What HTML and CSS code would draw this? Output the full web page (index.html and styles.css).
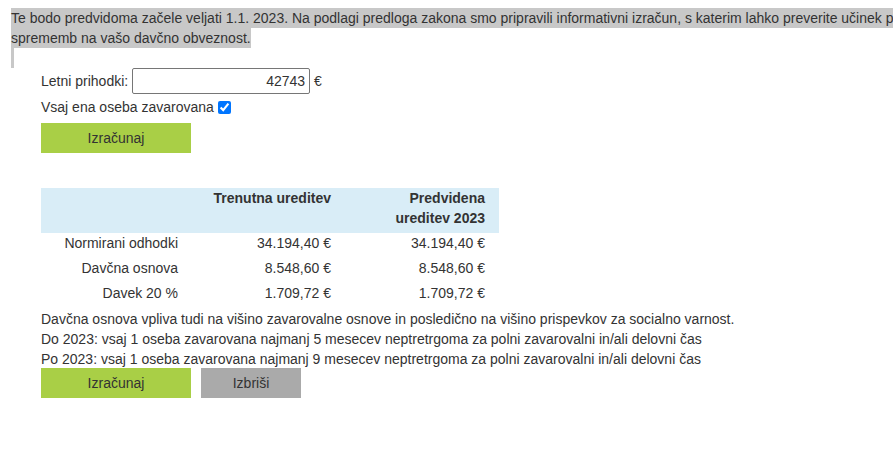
FILE: index.html
```html
<!DOCTYPE html>
<html>
<head>
    <meta charset="UTF-8">
    <meta name="viewport" content="width=device-width, initial-scale=1.0">
    <title>Informativni izračun</title>
    <link rel="stylesheet" href="styles.css">
</head>

<body>
    <div class="intro">
        <span class="mark">Te bodo predvidoma začele veljati 1.1. 2023. Na podlagi predloga zakona smo pripravili informativni izračun, s katerim lahko preverite učinek predlaganih sprememb na vašo davčno obveznost.</span><br>
        <span class="mark-gap"></span>
    </div>

    <div class="calc">
        <div class="row-income">
            <label for="income">Letni prihodki:</label>
            <input type="text" id="income" class="income" value="42743"> €
        </div>
        <div class="row-check">
            <label for="insured">Vsaj ena oseba zavarovana</label><input type="checkbox" id="insured" checked>
        </div>
        <button class="btn btn-green">Izračunaj</button>

        <table class="result">
            <thead>
                <tr>
                    <th class="col-label"></th>
                    <th class="col-now">Trenutna ureditev</th>
                    <th class="col-new">Predvidena ureditev 2023</th>
                </tr>
            </thead>
            <tbody>
                <tr>
                    <td>Normirani odhodki</td>
                    <td>34.194,40 €</td>
                    <td>34.194,40 €</td>
                </tr>
                <tr>
                    <td>Davčna osnova</td>
                    <td>8.548,60 €</td>
                    <td>8.548,60 €</td>
                </tr>
                <tr>
                    <td>Davek 20 %</td>
                    <td>1.709,72 €</td>
                    <td>1.709,72 €</td>
                </tr>
            </tbody>
        </table>

        <div class="notes">
            <p>Davčna osnova vpliva tudi na višino zavarovalne osnove in posledično na višino prispevkov za socialno varnost.</p>
            <p>Do 2023: vsaj 1 oseba zavarovana najmanj 5 mesecev neptretrgoma za polni zavarovalni in/ali delovni čas</p>
            <p>Po 2023: vsaj 1 oseba zavarovana najmanj 9 mesecev neptretrgoma za polni zavarovalni in/ali delovni čas</p>
        </div>

        <div class="actions">
            <button class="btn btn-green">Izračunaj</button>
            <button class="btn btn-gray btn-small">Izbriši</button>
        </div>
    </div>
</body>
</html>
```

FILE: styles.css
```css
html, body {
    overflow-x: hidden;
}

body {
    margin: 0;
    font-family: "Liberation Sans", Arial, sans-serif;
    font-size: 14px;
    line-height: 20px;
    color: #333;
    background-color: #fff;
}

.intro {
    width: 970px;
    padding: 9px 0 0 11px;
    line-height: 19.5px;
}

.mark {
    background-color: #c8c8c8;
    padding: 2px 0;
}

.mark-gap {
    display: inline-block;
    width: 3px;
    height: 20px;
    vertical-align: top;
    background-color: #c8c8c8;
}

.calc {
    padding-left: 41px;
}

.row-income {
    height: 26px;
}

.income {
    box-sizing: border-box;
    width: 178px;
    height: 26px;
    padding: 0 4px;
    border: 1px solid #767676;
    border-radius: 2px;
    font-family: inherit;
    font-size: 14px;
    color: #333;
    text-align: right;
}

.row-check {
    margin-top: 3px;
}

.row-check input {
    margin: 0 0 0 4px;
    width: 13px;
    height: 13px;
    vertical-align: -2px;
}

.btn {
    width: 150px;
    height: 30px;
    border: none;
    border-radius: 0;
    font-family: inherit;
    font-size: 14px;
    color: #333;
    cursor: pointer;
}

.btn-green {
    background-color: #a9cf46;
}

.btn-gray {
    background-color: #aaaaaa;
}

.btn-small {
    width: 100px;
    margin-left: 10px;
}

.row-check + .btn {
    margin-top: 6px;
}

.result {
    margin-top: 35px;
    width: 458px;
    border-collapse: collapse;
}

.result th,
.result td {
    padding: 0 14px 5px 14px;
    text-align: right;
    vertical-align: top;
}

.result th {
    background-color: #d9edf7;
    font-weight: bold;
}

.col-label {
    width: 123px;
}

.col-now {
    width: 125px;
}

.col-new {
    width: 126px;
}

.notes {
    margin-top: 1px;
}

.notes p {
    margin: 0;
}

.actions {
    margin-top: -1px;
    display: flex;
}
```
